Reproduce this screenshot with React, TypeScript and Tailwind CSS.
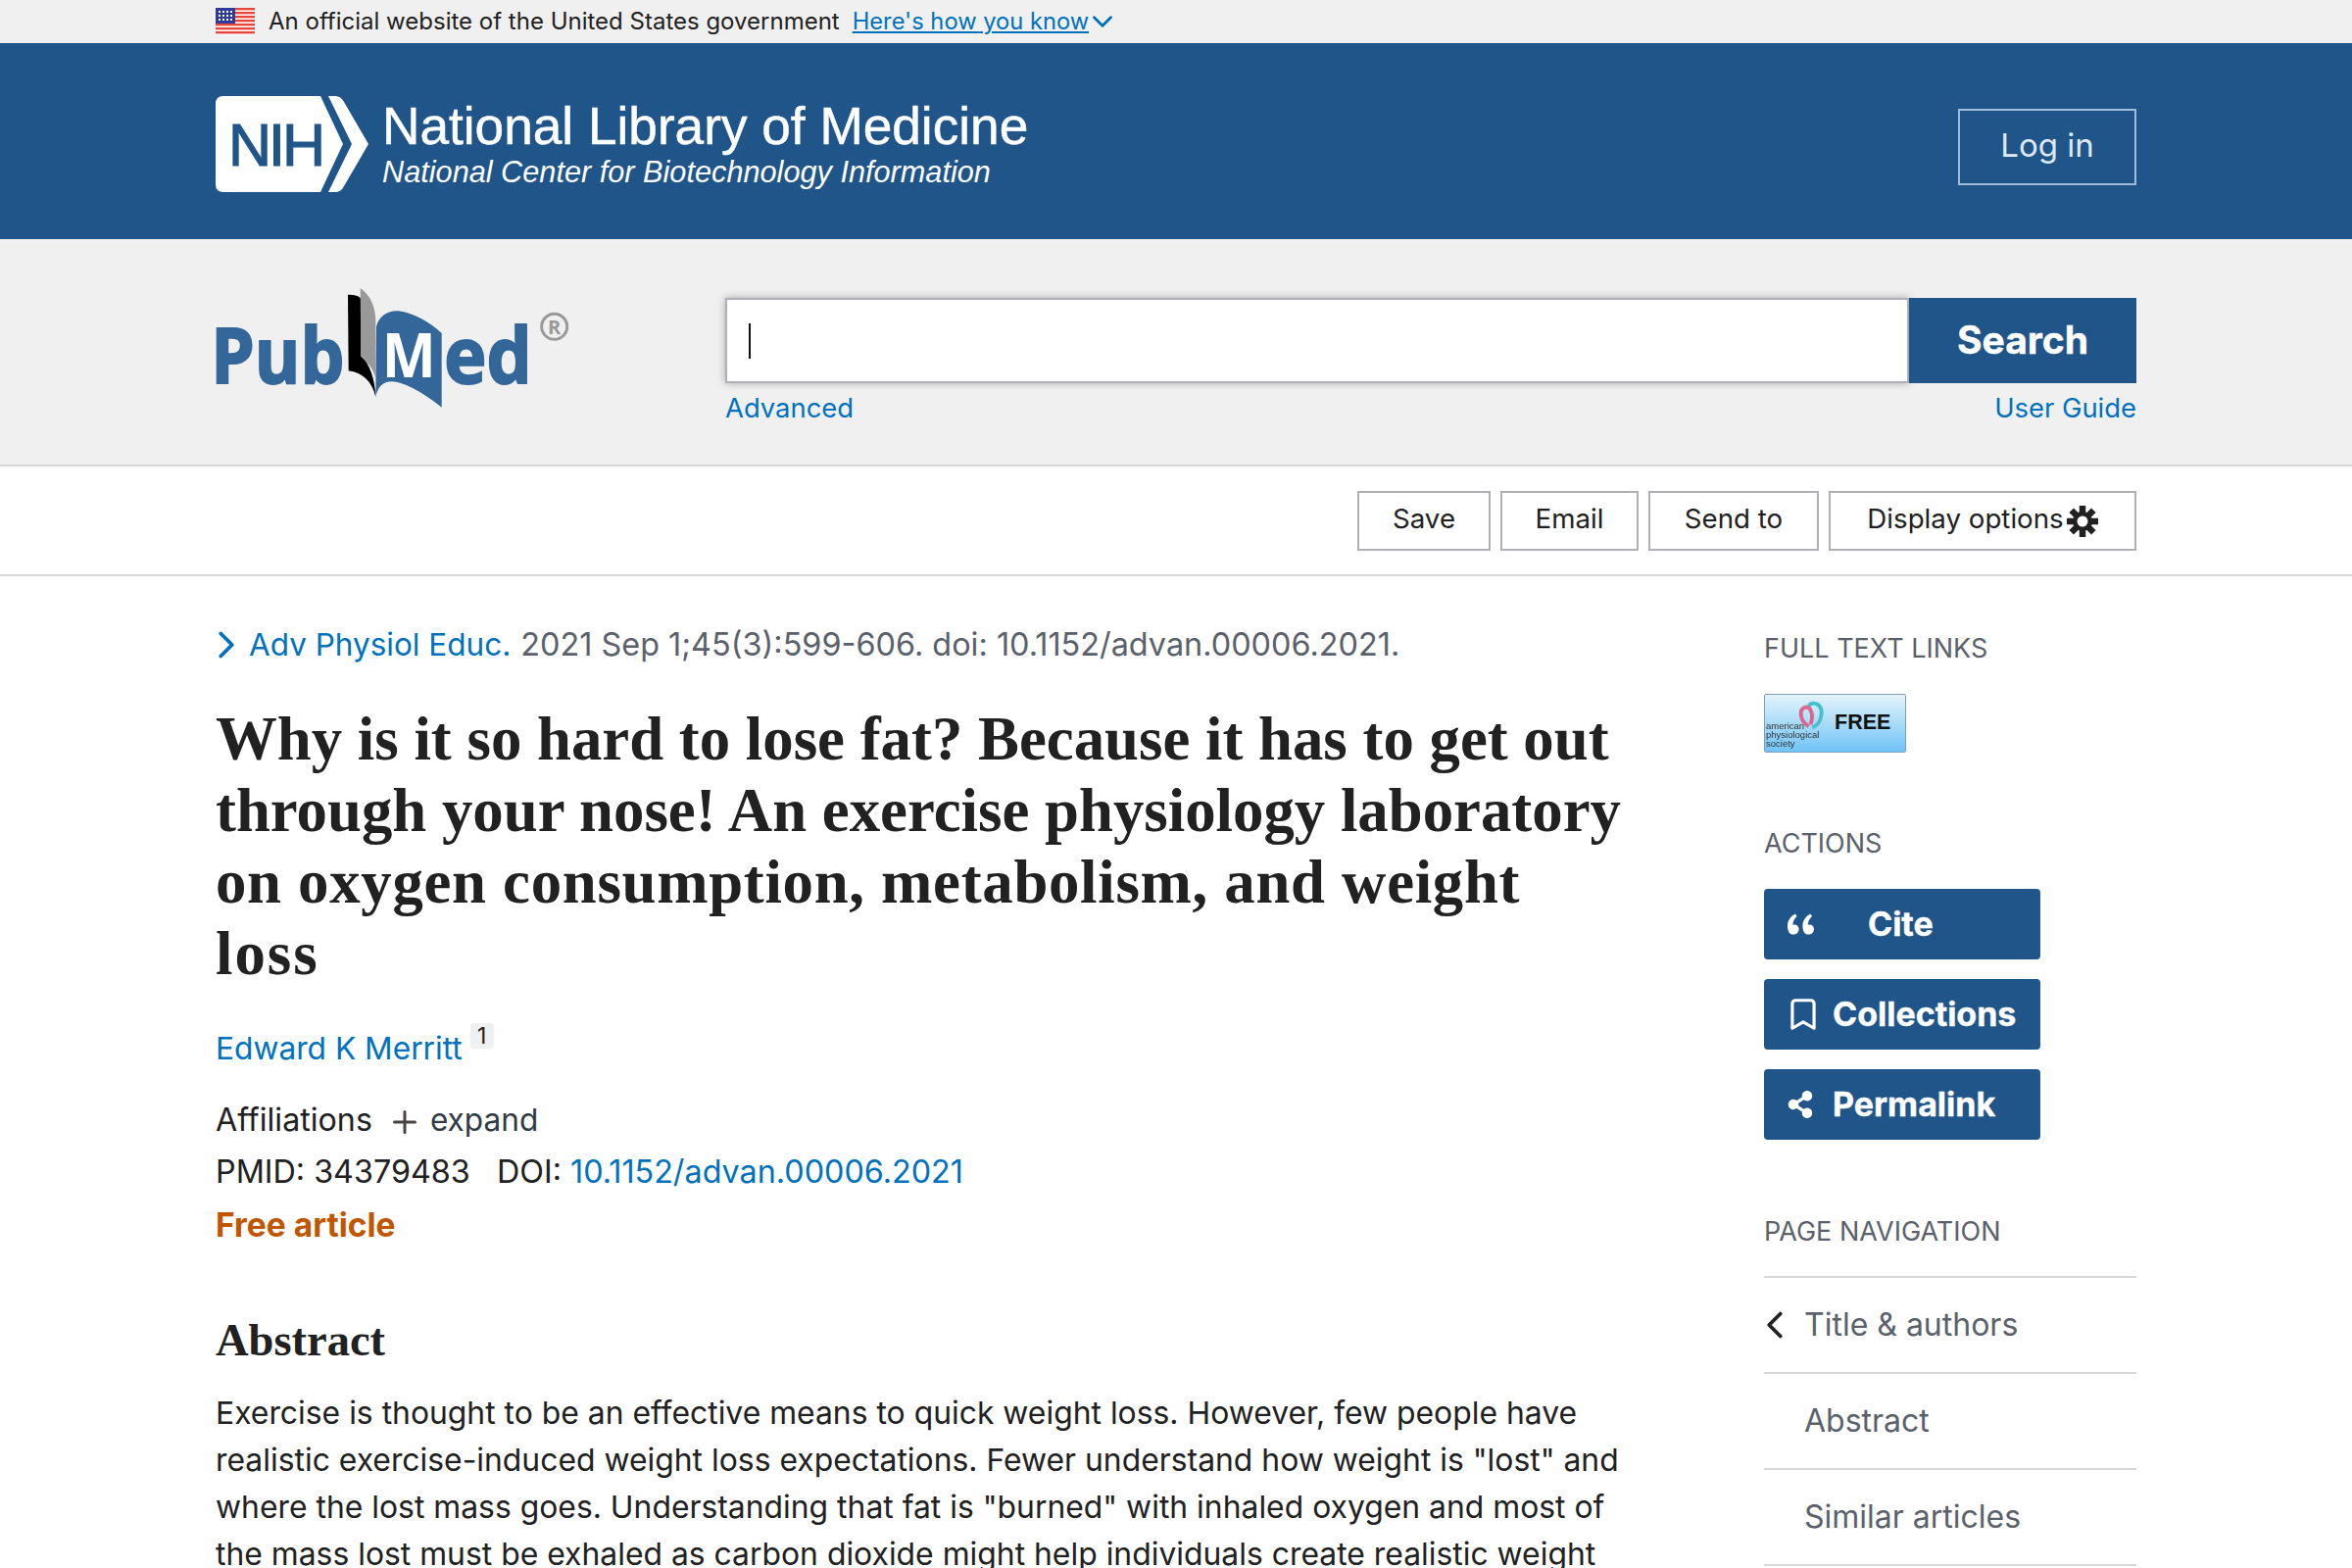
import { Bookmark, ChevronDown, ChevronLeft, ChevronRight, Plus } from 'lucide-react'
import { FaShareAlt } from 'react-icons/fa'

const inter = 'font-["Inter",sans-serif]'

function Flag() {
  return (
    <svg width="40" height="28" viewBox="0 0 40 28" className="shrink-0">
      <rect width="40" height="28" fill="#fff" />
      {[0, 4, 8, 12, 16, 20, 24].map((y) => (
        <rect key={y} y={y} width="40" height="2.4" fill="#e5483a" />
      ))}
      <rect width="20" height="16" fill="#2e3a9e" />
      {[3, 7, 11].map((y) =>
        [3, 7, 11, 15].map((x) => <rect key={x + '-' + y} x={x} y={y} width="2" height="2" fill="#fff" />),
      )}
    </svg>
  )
}

function NihLogo() {
  return (
    <svg width="156" height="98" viewBox="0 0 156 98" className="shrink-0">
      <path d="M8 0H107L130 49L107 98H8Q0 98 0 90V8Q0 0 8 0Z" fill="#fff" />
      <path d="M115 0H122Q128 0 131 6L156 49L131 92Q128 98 122 98H115L139 49Z" fill="#fff" />
      <text x="13" y="71" fontFamily="Liberation Sans" fontSize="61" letterSpacing="-3" stroke="#20558a" strokeWidth="1.2" fill="#20558a">
        NIH
      </text>
    </svg>
  )
}

function PubMedLogo() {
  return (
    <svg width="400" height="170" viewBox="0 0 1200 510" className="shrink-0">
      <g fontFamily="Open Sans" fontWeight="700" fontSize="238" fill="#336699" stroke="#336699" strokeWidth="6">
        <text x="46" y="362" textLength="408" lengthAdjust="spacingAndGlyphs">Pub</text>
        <text x="760" y="362" textLength="268" lengthAdjust="spacingAndGlyphs">ed</text>
      </g>
      <path d="M465 92C485 92 500 95 505 105V280C530 300 548 350 550 405C540 360 510 330 467 325Z" fill="#000" />
      <path d="M503 72C535 95 550 130 550 175V350C545 320 525 300 505 282Z" fill="#999" />
      <path d="M552 190C560 155 590 140 620 142C665 148 715 175 752 210V437C700 395 640 360 600 358C575 358 558 370 550 405Z" fill="#336699" />
      <text x="569" y="345" fontFamily="Open Sans" fontWeight="700" fontSize="190" textLength="165" lengthAdjust="spacingAndGlyphs" fill="#fff">M</text>
      <circle cx="1097" cy="190" r="39" fill="none" stroke="#999" strokeWidth="9" />
      <text x="1097" y="212" textAnchor="middle" fontFamily="Open Sans" fontWeight="700" fontSize="60" fill="#999">R</text>
    </svg>
  )
}

function QuoteIcon() {
  return (
    <svg width="27" height="22" viewBox="0 0 28 22" fill="#fff">
      <path d="M8 0C3 3 0 7 0 13C0 18 2 22 6 22C9.500 22 12 19.500 12 16.500C12 13.500 10 11.500 7 11.500C6.500 11.500 6 11.500 5.500 11.700C5.800 8 7.500 5 10 2.500Z" />
      <path d="M24 0C19 3 16 7 16 13C16 18 18 22 22 22C25.500 22 28 19.500 28 16.500C28 13.500 26 11.500 23 11.500C22.500 11.500 22 11.500 21.500 11.700C21.800 8 23.500 5 26 2.500Z" />
    </svg>
  )
}

// square-toothed cog, the react-icons ones are too round
function GearIcon() {
  return (
    <svg width="32" height="32" viewBox="0 0 32 32" className="shrink-0 mt-[4px] ml-[3px]">
      {[0, 45, 90, 135, 180, 225, 270, 315].map((a) => (
        <rect key={a} x="12.750" y="0" width="6.500" height="9" fill="#212121" transform={`rotate(${a} 16 16)`} />
      ))}
      <circle cx="16" cy="16" r="10" fill="#212121" />
      <circle cx="16" cy="16" r="5.500" fill="#fff" />
    </svg>
  )
}

function FreeBadge() {
  return (
    <div className="relative w-[145px] h-[60px] rounded-[2px] border border-[#7d9fb8] bg-gradient-to-b from-[#e4f3fb] via-[#a9dcf8] to-[#6fc3f8] overflow-hidden">
      <svg width="29" height="37" viewBox="0 0 30 34" className="absolute left-[31px] top-[3px]" fill="none" strokeWidth="4">
        <path d="M14 28C4 22 4 10 10 8C16 6 20 16 16 26" stroke="#d9688f" />
        <path d="M14 6C20 0 30 6 27 18C26 24 22 28 18 29" stroke="#45c0cf" />
      </svg>
      <div className="absolute left-[1px] top-[27px] text-[9.5px] leading-[9px] font-['Liberation_Sans',sans-serif] text-[#333] blur-[0.5px]">
        american
        <br />
        physiological
        <br />
        society
      </div>
      <span className="absolute left-[71px] top-[14px] text-[21.5px] leading-[28px] font-bold font-['Liberation_Sans',sans-serif] text-[#111]">
        FREE
      </span>
    </div>
  )
}

function ToolButton({ label, width, children }: { label: string; width: string; children?: React.ReactNode }) {
  return (
    <button className={`${width} h-[61px] border-2 border-[#aeb0b5] bg-white flex items-center justify-center pb-[3px] text-[#212121] text-[27.7px] ${inter}`}>
      {label}
      {children}
    </button>
  )
}

function ActionButton({ label, icon, textClass }: { label: string; icon: React.ReactNode; textClass: string }) {
  return (
    <div className={`h-[72px] rounded-[4px] bg-[#20558a] flex items-center text-white text-[34px] font-bold [-webkit-text-stroke:0.4px_white] ${inter}`}>
      <span className="w-[70px] flex justify-center pl-[4px]">{icon}</span>
      <span className={`-mt-[2px] ${textClass}`}>{label}</span>
    </div>
  )
}

function SideHeading({ children, className }: { children: string; className: string }) {
  return <h3 className={`h-[40px] leading-[40px] text-[27px] font-normal text-[#5b616b] ${className}`}>{children}</h3>
}

function NavRow({ label, arrow }: { label: string; arrow?: boolean }) {
  return (
    <div className="h-[98px] border-b-2 border-[#d6d7d9] flex items-center text-[32px] text-[#5b616b]">
      <span className="w-[41px] flex">
        {arrow && <ChevronLeft size={46} strokeWidth={2} className="text-[#212121] -ml-[12px] -mr-[16px]" />}
      </span>
      {label}
    </div>
  )
}

export default function App() {
  return (
    <div className={`h-[1600px] w-[2400px] overflow-hidden bg-white text-[#212121] ${inter}`}>
      <div className="h-[44px] bg-[#f0f0f0] flex items-center pl-[220px] text-[24px]">
        <Flag />
        <span className="ml-[14px]">An official website of the United States government</span>
        <span className="ml-[13px] text-[23.7px] text-[#0071bc] underline">Here's how you know</span>
        <ChevronDown size={34} strokeWidth={2} className="text-[#0071bc] -ml-[3px]" />
      </div>

      <header className="h-[200px] bg-[#20558a] flex items-center justify-between px-[220px] pt-[6px]">
        <div className="flex items-center">
          <NihLogo />
          <div className="ml-[14px] text-white font-['Liberation_Sans',sans-serif]">
            <div className="text-[53.2px] leading-[56px] [-webkit-text-stroke:0.5px_white]">National Library of Medicine</div>
            <div className="text-[30.7px] leading-[36px] mt-[1px] italic">National Center for Biotechnology Information</div>
          </div>
        </div>
        <button className="w-[182px] h-[78px] border-2 border-[#9fbdd9] text-[33px] text-[#dfe9f3] mt-[6px] pb-[2px]">Log in</button>
      </header>

      <section className="h-[232px] bg-[#f0f0f0] border-b-2 border-[#d6d7d9] flex px-[200px]">
        <div className="w-[540px] pt-[26px]">
          <PubMedLogo />
        </div>
        <div className="flex-1 mr-[20px] pt-[60px]">
          <div className="flex h-[87px]">
            <div className="flex-1 bg-white border-2 border-[#aeb0b5] shadow-[0_0_8px_rgba(0,0,0,0.3)] flex items-center pl-[22px]">
              <span className="w-[2px] h-[36px] bg-[#111]" />
            </div>
            <button className="w-[232px] bg-[#20558a] text-white text-[39px] font-bold [-webkit-text-stroke:0.4px_white]">Search</button>
          </div>
          <div className="flex justify-between text-[#0071bc] text-[27.4px] leading-[40px] mt-[5px]">
            <span>Advanced</span>
            <span>User Guide</span>
          </div>
        </div>
      </section>

      <div className="h-[112px] border-b-2 border-[#d6d7d9] flex items-center justify-end gap-[10px] pr-[220px]">
        <ToolButton label="Save" width="w-[136px]" />
        <ToolButton label="Email" width="w-[141px]" />
        <ToolButton label="Send to" width="w-[174px]" />
        <ToolButton label="Display options" width="w-[314px]">
          <GearIcon />
        </ToolButton>
      </div>

      <div className="flex px-[220px]">
        <main className="w-[1440px] pt-[46px]">
          <div className="flex items-center h-[48px] text-[32.4px] text-[#5b616b] whitespace-nowrap">
            <ChevronRight size={46} strokeWidth={2} className="text-[#0071bc] -ml-[12px]" />
            <span className="text-[31.5px] text-[#0071bc]">Adv Physiol Educ.</span>
            <span className="ml-[10px]">2021 Sep 1;45(3):599-606. doi: 10.1152/advan.00006.2021.</span>
          </div>
          <h1 className="mt-[36px] text-[62.8px] leading-[73px] font-bold font-['Liberation_Serif',serif]">
            Why is it so hard to lose fat? Because it has to get out
            <br />
            through your nose! An exercise physiology laboratory
            <br />
            <span className="tracking-[0.7px]">on oxygen consumption, metabolism, and weight</span>
            <br />
            <span className="tracking-[2px]">loss</span>
          </h1>
          <div className="mt-[36px] h-[48px] text-[31.7px] leading-[48px] text-[#0071bc] flex">
            Edward K Merritt
            <span className="ml-[8px] h-[26px] w-[24px] rounded-[3px] bg-[#f0f0f0] text-[#212121] text-[23px] leading-[26px] text-center mt-[-2px]">1</span>
          </div>
          <div className="mt-[22px] h-[54px] flex items-center text-[32.2px]">
            Affiliations
            <Plus size={36} strokeWidth={2} className="ml-[15px] mr-[8px] text-[#494440] mt-[4px]" />
            <span className="text-[31.6px] text-[#323a45]">expand</span>
          </div>
          <div className="h-[53px] flex items-center text-[32.3px] whitespace-pre">
            PMID: 34379483{'   '}DOI: <span className="text-[#0071bc]">10.1152/advan.00006.2021</span>
          </div>
          <div className="h-[54px] flex items-center text-[33.5px] font-bold text-[#c05600]">Free article</div>
          <h2 className="mt-[61px] h-[60px] leading-[60px] text-[46.5px] font-bold font-['Liberation_Serif',serif]">Abstract</h2>
          <p className="mt-[20px] text-[31.87px] leading-[48px]">
            Exercise is thought to be an effective means to quick weight loss. However, few people have realistic exercise-induced weight loss expectations. Fewer understand how weight is "lost" and where the lost mass goes. Understanding that fat is "burned" with inhaled oxygen and most of the mass lost must be exhaled as carbon dioxide might help individuals create realistic weight
          </p>
        </main>

        <aside className="ml-[140px] w-[380px] pt-[54px]">
          <SideHeading className="">FULL TEXT LINKS</SideHeading>
          <div className="mt-[26px]">
            <FreeBadge />
          </div>
          <SideHeading className="mt-[73px]">ACTIONS</SideHeading>
          <div className="mt-[26px] w-[282px] flex flex-col gap-[20px]">
            <ActionButton label="Cite" icon={<QuoteIcon />} textClass="ml-[36px]" />
            <ActionButton label="Collections" icon={<Bookmark size={38} strokeWidth={2} className="ml-[5px]" />} textClass="" />
            <ActionButton label="Permalink" icon={<FaShareAlt size={28} />} textClass="" />
          </div>
          <SideHeading className="mt-[74px]">PAGE NAVIGATION</SideHeading>
          <div className="mt-[25px] border-t-2 border-[#d6d7d9]">
            <NavRow label="Title & authors" arrow />
            <NavRow label="Abstract" />
            <NavRow label="Similar articles" />
          </div>
        </aside>
      </div>
    </div>
  )
}
